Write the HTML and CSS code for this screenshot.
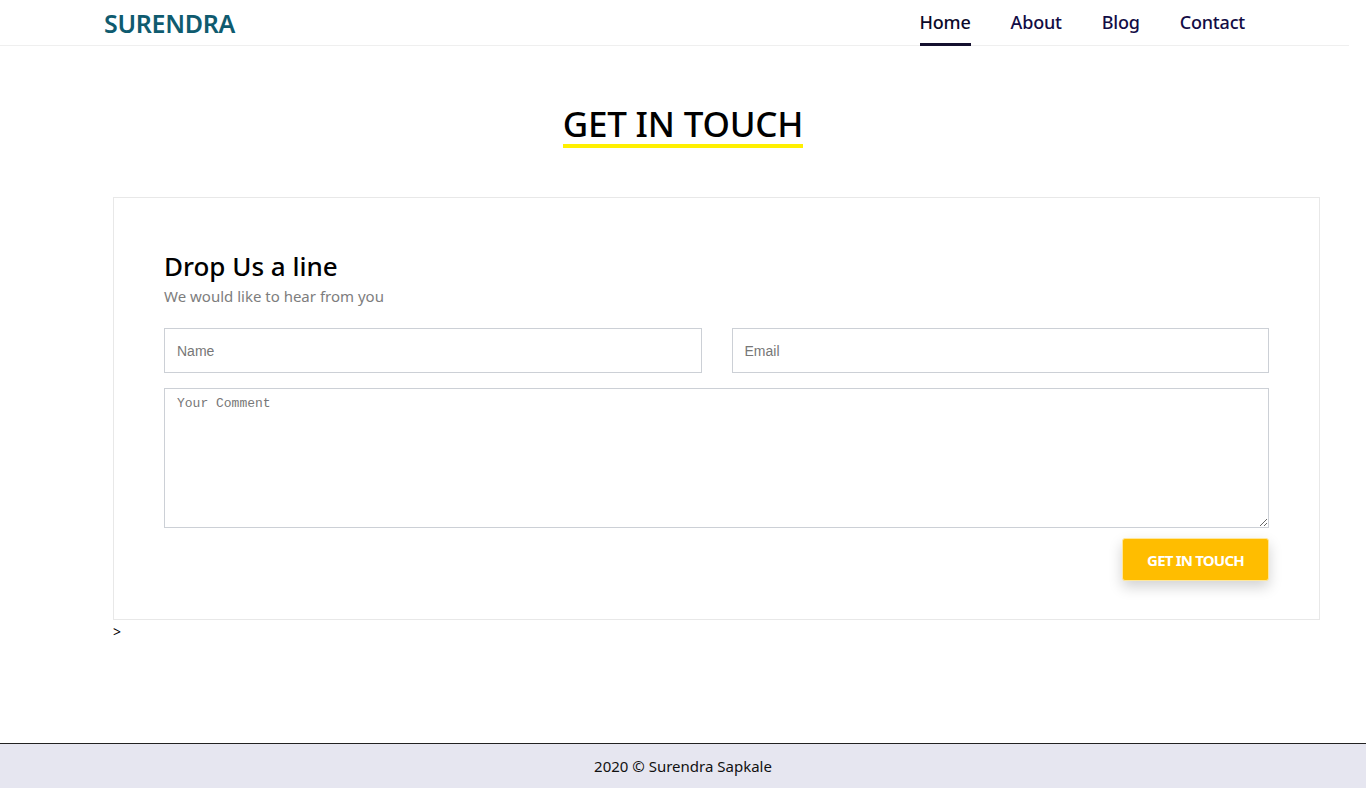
FILE: index.html
```html
<!DOCTYPE html>
<html lang="en">
<head>
<meta charset="utf-8">
<title>Surendra - Contact</title>
<link rel="stylesheet" href="styles.css">
</head>
<body>
<div class="page">
  <header class="header">
    <div class="header-inner">
      <a class="logo" href="#">SURENDRA</a>
      <nav class="nav">
        <a class="nav-link active" href="#">Home</a>
        <a class="nav-link" href="#">About</a>
        <a class="nav-link" href="#">Blog</a>
        <a class="nav-link" href="#">Contact</a>
      </nav>
    </div>
  </header>

  <main class="main">
    <div class="title-wrap">
      <h1 class="title">GET IN TOUCH</h1>
    </div>

    <section class="card">
      <h2 class="card-title">Drop Us a line</h2>
      <p class="card-sub">We would like to hear from you</p>
      <form class="form">
        <div class="row">
          <input class="field" type="text" placeholder="Name">
          <input class="field" type="email" placeholder="Email">
        </div>
        <textarea class="comment" placeholder="Your Comment"></textarea>
        <div class="actions">
          <button class="btn" type="button">GET IN TOUCH</button>
        </div>
      </form>
    </section>
    <div class="stray">&gt;</div>
  </main>

  <footer class="footer">2020 © Surendra Sapkale</footer>
</div>
</body>
</html>
```

FILE: styles.css
```css
* { box-sizing: border-box; }

html, body {
  margin: 0;
  padding: 0;
}

body {
  font-family: "Noto Sans", "Open Sans", sans-serif;
  color: #111;
  background: #fff;
}

.page {
  min-height: 100vh;
  display: flex;
  flex-direction: column;
}

.header {
  width: 1349px;
  border-bottom: 1px solid #efefef;
}

.header-inner {
  height: 45px;
  display: flex;
  align-items: stretch;
  justify-content: space-between;
  padding: 0 104px 0 104px;
}

.logo {
  font-size: 25px;
  font-weight: 600;
  color: #0f5b6f;
  text-decoration: none;
  line-height: 46px;
  letter-spacing: -0.3px;
}

.nav {
  display: flex;
  gap: 40px;
  align-items: stretch;
}

.nav-link {
  font-size: 18px;
  font-weight: 500;
  color: #120c45;
  text-decoration: none;
  line-height: 45px;
  position: relative;
  letter-spacing: -0.2px;
}

.nav-link.active {
  color: #0c0a2a;
}

.nav-link.active::after {
  content: "";
  position: absolute;
  left: 0;
  right: 0;
  bottom: -1px;
  height: 3px;
  background: #14102e;
}

.main {
  padding-left: 113px;
}

.title-wrap {
  display: flex;
  justify-content: center;
  padding-top: 57px;
  width: 1140px;
}

.title {
  margin: 0;
  font-size: 35px;
  font-weight: 500;
  color: #000;
  line-height: 41px;
  border-bottom: 4px solid #fff000;
  letter-spacing: -0.2px;
}

.card {
  width: 1207px;
  margin-top: 49px;
  border: 1px solid #e8e8e8;
  padding: 51px 50px 38px 50px;
}

.card-title {
  margin: 0;
  font-size: 26px;
  font-weight: 500;
  line-height: 34px;
  color: #000;
}

.card-sub {
  margin: 2px 0 0 0;
  font-size: 15px;
  color: #7d7d7d;
  line-height: 22px;
}

.form {
  margin-top: 21px;
  display: flex;
  flex-direction: column;
  gap: 15px;
}

.row {
  display: flex;
  gap: 30px;
}

.field {
  flex: 1;
  height: 45px;
  border: 1px solid #ccd0d6;
  padding: 0 12px;
  font-family: "Liberation Sans", Arial, sans-serif;
  font-size: 14px;
  color: #333;
  outline: none;
}

.field::placeholder, .comment::placeholder {
  color: #777;
}

.comment {
  display: block;
  height: 140px;
  border: 1px solid #ccd0d6;
  padding: 7px 12px;
  font-family: "Liberation Mono", monospace;
  font-size: 13px;
  resize: vertical;
  outline: none;
}

.actions {
  display: flex;
  justify-content: flex-end;
  margin-top: -5px;
}

.btn {
  width: 147px;
  height: 43px;
  background: #ffbd00;
  border: 1px solid #ffe79a;
  border-radius: 3px;
  color: #fff;
  font-family: "Noto Sans", sans-serif;
  font-weight: 700;
  font-size: 15px;
  letter-spacing: -0.8px;
  box-shadow: 0 6px 14px rgba(0, 0, 0, 0.18);
  cursor: pointer;
}

.stray {
  font-size: 14px;
  line-height: 22px;
  color: #000;
  margin-top: 1px;
}

.footer {
  margin-top: auto;
  height: 45px;
  border-top: 1px solid #222;
  background: #e6e6f0;
  text-align: center;
  font-size: 15px;
  line-height: 44px;
  color: #111;
}
```
